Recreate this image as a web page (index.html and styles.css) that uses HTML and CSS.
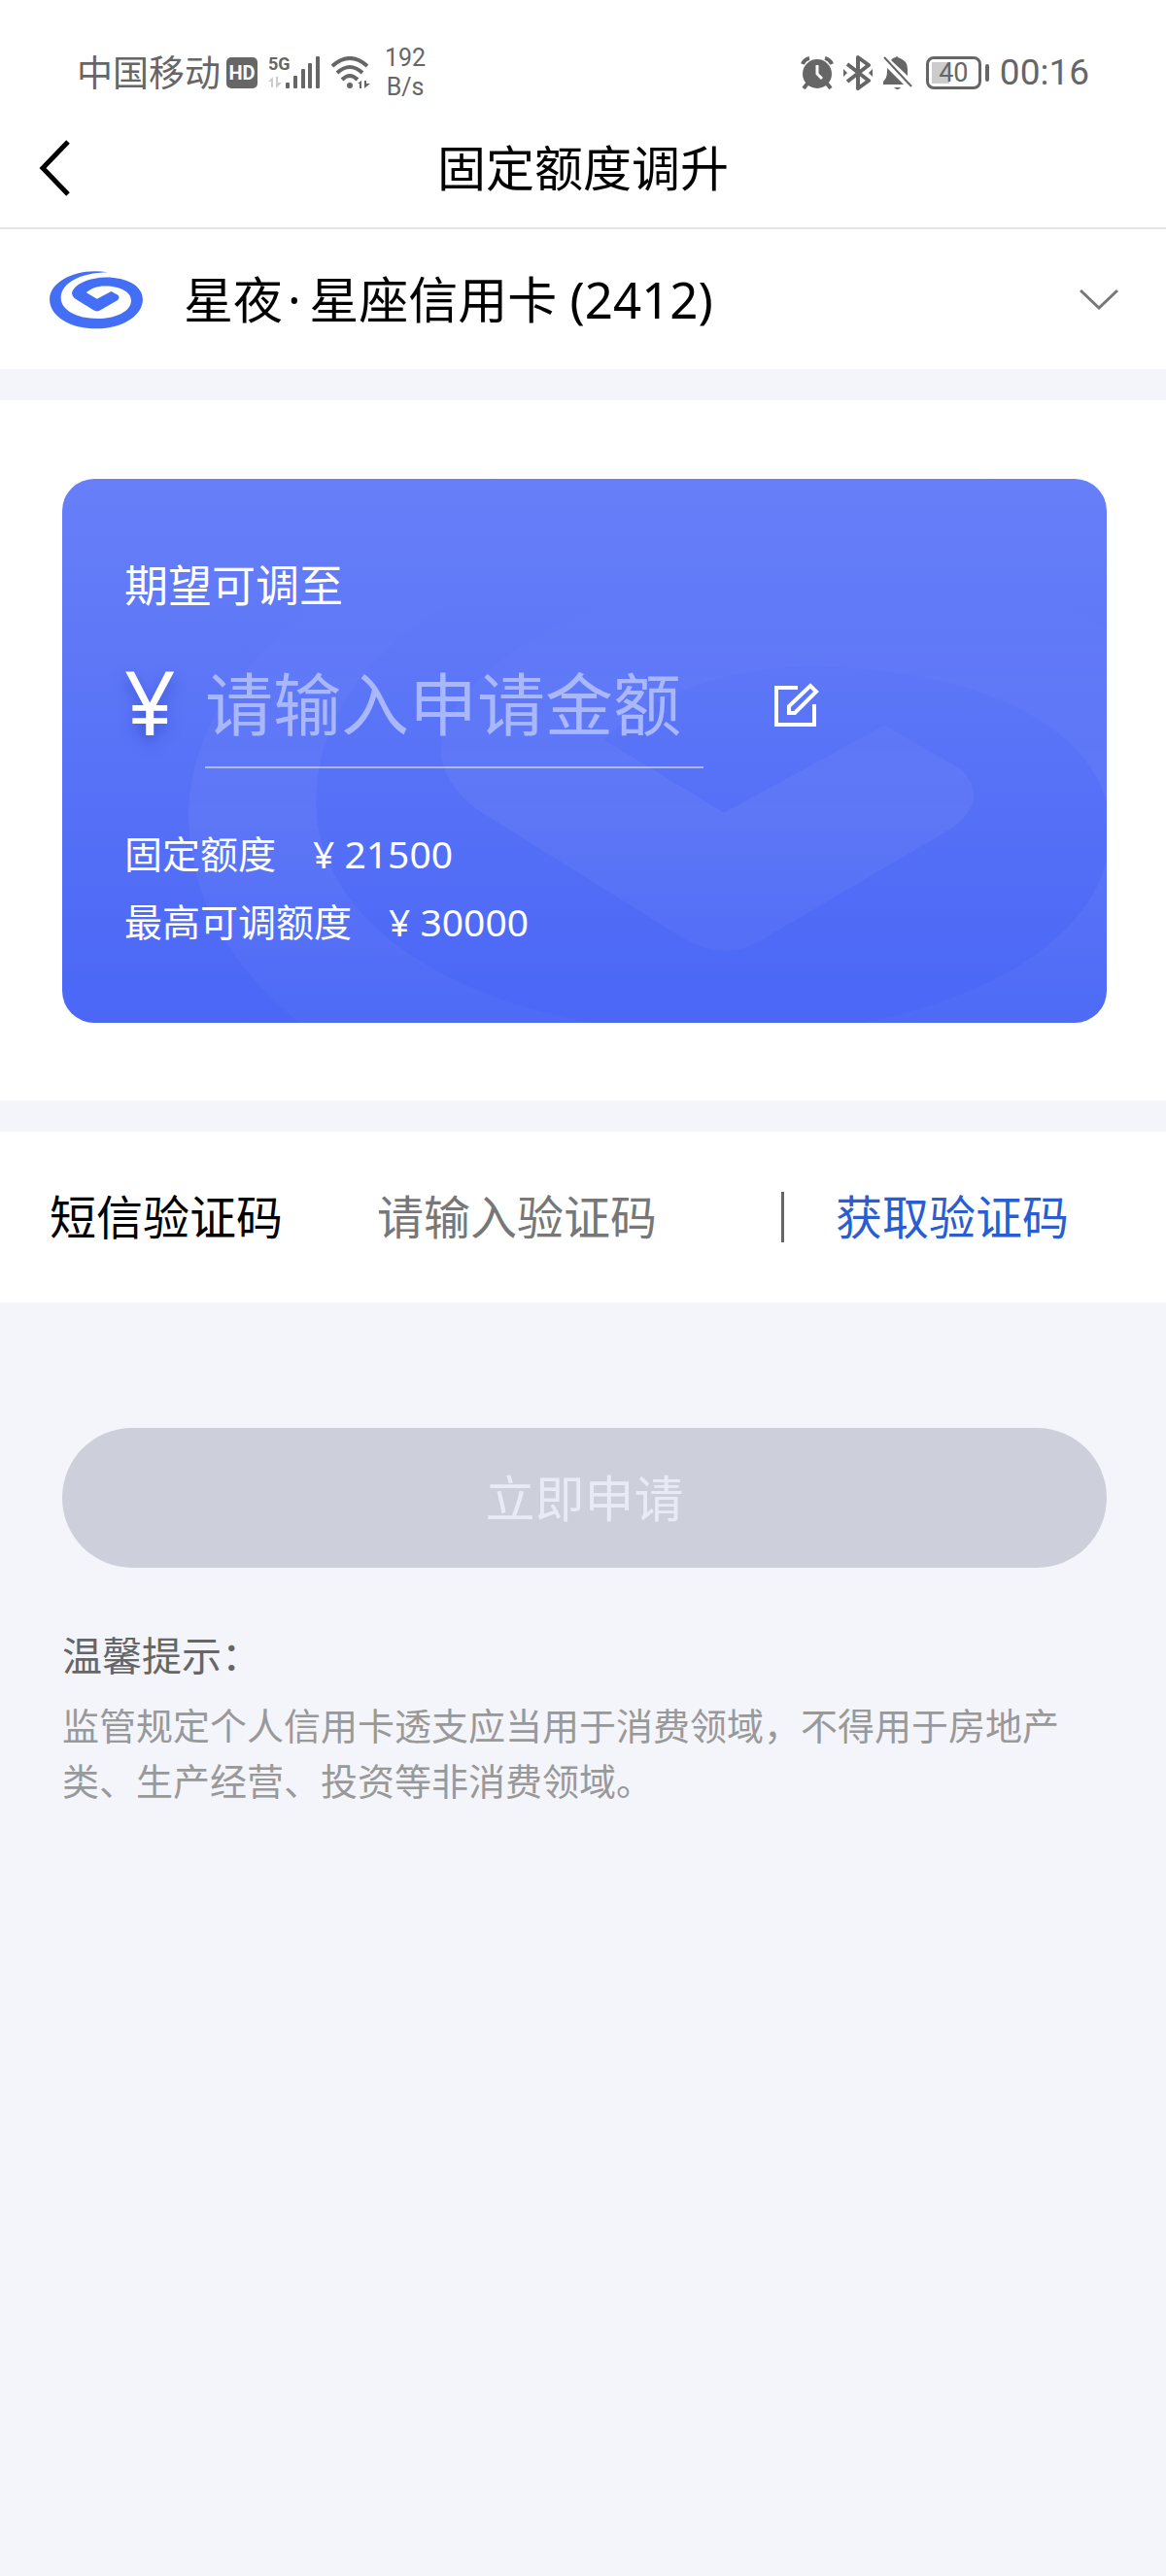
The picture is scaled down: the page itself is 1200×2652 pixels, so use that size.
FILE: index.html
```html
<!DOCTYPE html>
<html lang="zh-CN">
<head>
    <meta charset="UTF-8">
    <meta name="viewport" content="width=device-width, initial-scale=1.0">
    <title>固定额度调升</title>
    <link rel="stylesheet" href="styles.css">
</head>
<body>
    <svg class="defs" aria-hidden="true">
        <symbol id="swirl" viewBox="60 55 292 187">
            <path d="M243 65C150 49 63 92 63 149C63 201 127 240 208 240C289 240 352 199 352 149C352 107 302 81 238 81C190 82 147 98 134 123Q128 136 142 147L198 182Q210 190 222 182L273 152Q283 144 275 136L254 124L210 148L177 128C190 115 214 107 238 108C282 109 316 126 316 153C316 186 268 209 212 209C146 209 98 182 98 145C98 98 158 67 243 65Z"/>
        </symbol>
    </svg>

    <div class="status-bar">
        <div class="status-left">
            <span class="carrier">中国移动</span>
            <span class="hd">HD</span>
            <span class="signal">
                <span class="network">5G</span>
                <svg viewBox="0 0 54 34" fill="#666">
                    <path fill="#ccc" d="M0 26L5 21V32H3V26ZM8 21H10V27H14L8 33Z"/>
                    <rect x="18" y="27" width="4" height="6" rx="1"/>
                    <rect x="26" y="20" width="4" height="13" rx="1"/>
                    <rect x="34" y="13" width="4" height="20" rx="1"/>
                    <rect x="41" y="7" width="4" height="26" rx="1"/>
                    <rect x="49" y="0" width="4" height="33" rx="1"/>
                </svg>
            </span>
            <svg class="wifi" viewBox="0 0 40 34" fill="none" stroke="#666" stroke-width="4">
                <path d="M1 10Q19-6 37 10M6 17Q19 5 32 17M11 24Q19 16 27 24"/>
                <circle cx="19" cy="30" r="3" fill="#666" stroke="none"/>
                <path d="M27 28L31 25V33H29V28ZM34 25H36V28H40L34 33Z" fill="#666" stroke="none"/>
            </svg>
            <span class="speed">192<br>B/s</span>
        </div>
        <div class="status-right">
            <svg class="alarm" viewBox="0 0 34 34" fill="none" stroke="#666">
                <circle cx="17" cy="18" r="15" fill="#666" stroke="none"/>
                <path stroke-width="4" d="M2 8Q4 3 9 2M25 2Q30 3 32 8M7 28L3 33M27 28L31 33"/>
                <path stroke="#fff" stroke-width="3" d="M17 9V18L22 23"/>
            </svg>
            <svg class="bluetooth" viewBox="0 0 30 36" fill="none" stroke="#666" stroke-width="4" stroke-linejoin="round">
                <path d="M4 9L26 26L15 34V2L26 10L4 27"/>
                <path d="M0 14L4 18L0 22ZM30 14L26 18L30 22Z" fill="#666" stroke="none"/>
            </svg>
            <svg class="bell" viewBox="0 0 32 36" fill="#666">
                <path d="M1 30V27Q5 23 5 17V13L22 30ZM9 5Q11 2 14 2Q15 0 16 2Q26 5 26 14V21ZM12 33H19Q16 37 12 33Z"/>
                <path d="M2 2L30 32" stroke="#666" stroke-width="2"/>
            </svg>
            <span class="battery"><span class="battery-body">40</span><span class="battery-cap"></span></span>
            <span class="clock">00:16</span>
        </div>
    </div>

    <header class="title-bar">
        <button type="button" class="back" aria-label="返回">
            <svg viewBox="0 0 32 58" fill="none" stroke="#000" stroke-width="5">
                <path d="M30 2L4 29L30 56"/>
            </svg>
        </button>
        <h1>固定额度调升</h1>
    </header>

    <main>
        <section class="account">
            <svg class="logo"><use href="#swirl"/></svg>
            <select aria-label="信用卡">
                <option>星夜&#8202;·&#8201;星座信用卡 (2412)</option>
            </select>
            <svg class="chevron" viewBox="0 0 40 22" fill="none" stroke="#777" stroke-width="3">
                <path d="M1 2L20 20L39 2"/>
            </svg>
        </section>

        <section class="limit">
            <div class="limit-card">
                <svg class="watermark"><use href="#swirl"/></svg>
                <label class="limit-label" for="amount">期望可调至</label>
                <div class="amount-row">
                    <span class="yen">¥</span>
                    <input type="text" id="amount" inputmode="numeric" placeholder="请输入申请金额">
                    <button type="button" class="edit" aria-label="编辑">
                        <svg viewBox="0 0 46 46" fill="none" stroke="#fff" stroke-width="4">
                            <path d="M24 5H2V43H41V22"/>
                            <path d="M15 31V24L37 3L43 9L21 31Z"/>
                        </svg>
                    </button>
                </div>
                <dl class="limits">
                    <div>
                        <dt>固定额度</dt>
                        <dd>¥ 21500</dd>
                    </div>
                    <div>
                        <dt>最高可调额度</dt>
                        <dd>¥ 30000</dd>
                    </div>
                </dl>
            </div>
        </section>

        <section class="sms">
            <label for="code">短信验证码</label>
            <input type="text" id="code" inputmode="numeric" placeholder="请输入验证码">
            <button type="button">获取验证码</button>
        </section>

        <button type="submit" class="submit" disabled>立即申请</button>

        <section class="tips">
            <h2>温馨提示：</h2>
            <p>监管规定个人信用卡透支应当用于消费领域，不得用于房地产类、生产经营、投资等非消费领域。</p>
        </section>
    </main>
</body>
</html>
```

FILE: styles.css
```css
:root {
    --clr-bg: #f4f5fb;
    --clr-status: #666;
    --clr-link: #2a5cd2;
    --clr-disabled: #cdcfdb;
}

* {
    margin: 0;
    padding: 0;
    box-sizing: border-box;
}

body {
    font-family: "Noto Sans", "Noto Sans CJK SC", sans-serif;
    background: var(--clr-bg);
    color: #000;
    min-height: 100vh;
}

button,
input,
select {
    font: inherit;
    color: inherit;
    border: none;
    background: none;
    outline: none;
}

svg {
    display: block;
    flex: none;
}

.defs {
    position: absolute;
    width: 0;
    height: 0;
}

/* Status bar */
.status-bar {
    display: flex;
    justify-content: space-between;
    height: 112px;
    padding: 38px 79px 0;
    background: #fff;
    color: var(--clr-status);
    font-family: Roboto, "Noto Sans CJK SC", sans-serif;
}

.status-left,
.status-right {
    display: flex;
    align-items: center;
    height: 74px;
}

.carrier {
    font-family: "Noto Sans", "Noto Sans CJK SC", sans-serif;
    font-size: 37px;
    line-height: 40px;
}

.hd {
    width: 32px;
    margin-left: 6px;
    border-radius: 5px;
    background: var(--clr-status);
    color: #fff;
    font-size: 20px;
    font-weight: 700;
    line-height: 32px;
    text-align: center;
}

.signal {
    position: relative;
    margin-left: 11px;
}

.signal svg {
    width: 54px;
    height: 34px;
}

.network {
    position: absolute;
    top: -2px;
    left: 0;
    font-size: 18px;
    font-weight: 700;
    line-height: 20px;
}

.wifi {
    width: 40px;
    height: 34px;
    margin-left: 11px;
}

.speed {
    margin-left: 15px;
    font-size: 25px;
    line-height: 30px;
    text-align: center;
}

.alarm {
    width: 34px;
    height: 34px;
}

.bluetooth {
    width: 30px;
    height: 36px;
    margin-left: 10px;
}

.bell {
    width: 32px;
    height: 36px;
    margin-left: 10px;
}

.battery {
    display: flex;
    align-items: center;
    gap: 4px;
    margin-left: 13px;
}

.battery-body {
    width: 57px;
    border: 3px solid var(--clr-status);
    border-radius: 8px;
    background: linear-gradient(#ccc, #ccc) 3px 3px / 18px 22px no-repeat;
    font-size: 27px;
    line-height: 28px;
    text-align: center;
}

.battery-cap {
    width: 4px;
    height: 18px;
    border-radius: 2px;
    background: var(--clr-status);
}

.clock {
    margin-left: 11px;
    font-size: 37px;
    line-height: 40px;
}

/* Title bar */
.title-bar {
    position: relative;
    height: 124px;
    background: #fff;
    border-bottom: 2px solid #e4e4e4;
}

.title-bar h1 {
    font-size: 50px;
    font-weight: 400;
    line-height: 122px;
    text-align: center;
}

.back {
    position: absolute;
    top: 32px;
    left: 40px;
    cursor: pointer;
}

.back svg {
    width: 32px;
    height: 58px;
}

/* Card selector */
.account {
    display: flex;
    align-items: center;
    height: 144px;
    padding: 0 49px 0 50px;
    background: #fff;
}

.logo {
    width: 97px;
    height: 62px;
    fill: #426ff5;
}

.account select {
    flex: 1;
    min-width: 0;
    margin-left: 42px;
    appearance: none;
    font-size: 51px;
    line-height: 76px;
    cursor: pointer;
}

.chevron {
    width: 40px;
    height: 22px;
    pointer-events: none;
}

/* Limit card */
.limit {
    margin: 32px 0;
    padding: 81px 61px 80px 64px;
    background: #fff;
}

.limit-card {
    position: relative;
    overflow: hidden;
    padding: 80px 64px 69px;
    border-radius: 33px;
    background: linear-gradient(#677ff8, #4a67f6);
    color: #fff;
}

.limit-card > * {
    position: relative;
}

.limit-card .watermark {
    position: absolute;
    top: -5px;
    left: 11%;
    width: 102%;
    height: 701px;
    fill: rgba(255, 255, 255, 0.05);
    mask-image: linear-gradient(transparent 15%, #000 50%, rgba(0, 0, 0, 0.5) 80%);
}

.limit-label {
    display: block;
    font-size: 45px;
    line-height: 60px;
}

.amount-row {
    display: flex;
    align-items: center;
    margin-top: 27px;
}

.yen {
    width: 83px;
    padding-bottom: 8px;
    font-size: 92px;
    line-height: 120px;
    text-shadow: 0 8px 14px rgba(40, 60, 190, 0.5);
}

.amount-row input {
    width: 513px;
    height: 131px;
    border-bottom: 2px solid rgba(255, 255, 255, 0.5);
    font-size: 70px;
}

.amount-row input::placeholder {
    color: #a9b8fd;
}

.edit {
    margin-left: 73px;
    cursor: pointer;
}

.edit svg {
    width: 46px;
    height: 46px;
}

.limits {
    margin-top: 53px;
    font-size: 39px;
    line-height: 70px;
}

.limits div {
    display: flex;
    gap: 38px;
}

/* SMS code */
.sms {
    display: flex;
    align-items: center;
    height: 176px;
    padding: 0 100px 0 51px;
    background: #fff;
    font-size: 48px;
    line-height: 52px;
}

.sms input {
    flex: 1;
    min-width: 0;
    margin-left: 97px;
}

.sms input::placeholder {
    color: #777;
}

.sms button {
    padding-left: 53px;
    border-left: 3px solid #666;
    color: var(--clr-link);
    cursor: pointer;
}

/* Submit */
.submit {
    display: block;
    width: calc(100% - 125px);
    height: 144px;
    margin: 129px 61px 0 64px;
    padding-bottom: 4px;
    border-radius: 72px;
    background: var(--clr-disabled);
    color: #e8ebf5;
    font-size: 51px;
}

/* Tips */
.tips {
    padding: 60px 90px 60px 64px;
}

.tips h2 {
    color: #666;
    font-size: 41px;
    font-weight: 400;
    line-height: 60px;
}

.tips p {
    margin-top: 14px;
    color: #999;
    font-size: 38px;
    line-height: 57px;
}
```
